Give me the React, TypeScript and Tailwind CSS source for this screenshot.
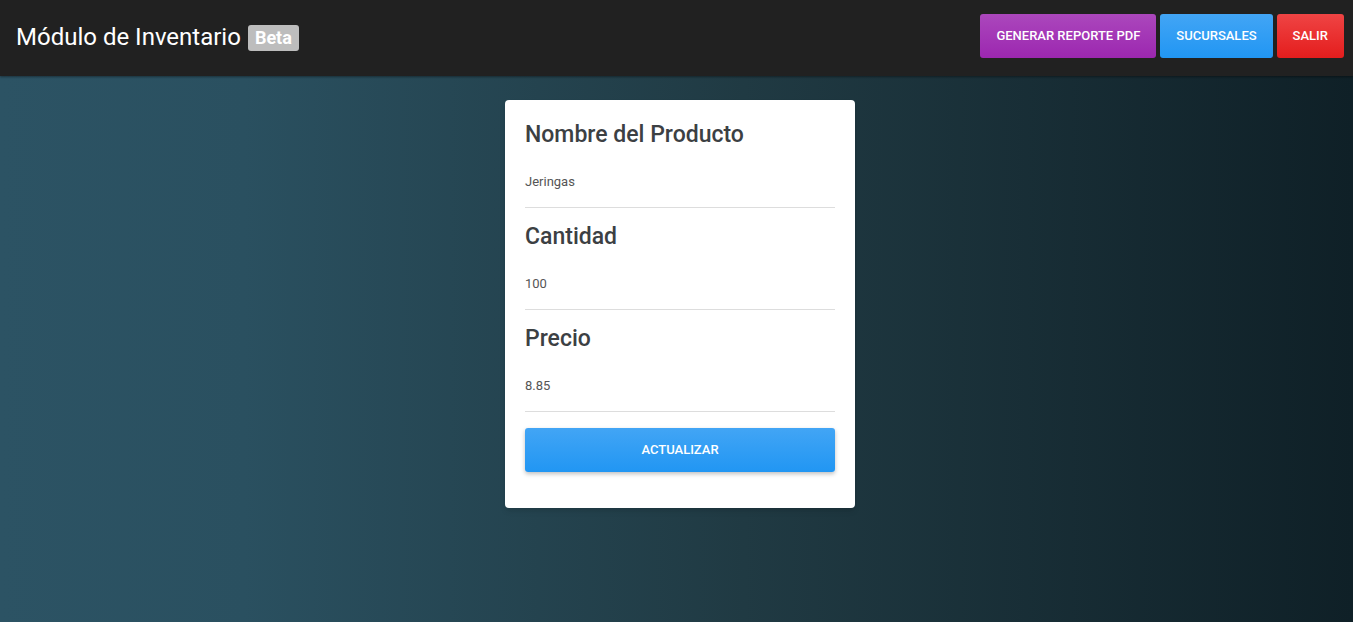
const App = () => {
  const fields = [
    { label: "Nombre del Producto", value: "Jeringas" },
    { label: "Cantidad", value: "100" },
    { label: "Precio", value: "8.85" },
  ];
  return (
    <div
      className="min-h-[622px] w-full bg-[linear-gradient(to_right,#2c5364_0%,#2a5060_18%,#203a43_55%,#0f2027_100%)]"
      style={{ fontFamily: "Roboto, 'Liberation Sans', sans-serif" }}
    >
      <div className="h-[76px] bg-[#212121] flex items-center justify-between pl-4 pr-[9px] shadow-[0_1px_2px_rgba(0,0,0,0.4)]">
        <div className="flex items-center gap-[7px] pb-[2px]">
          <div className="text-[24px] text-white leading-none">Módulo de Inventario</div>
          <span className="bg-[#bdbdbd] text-white font-bold text-[18px] leading-[26px] px-[7px] rounded-[3px] mt-[2px]">
            Beta
          </span>
        </div>
        <div className="flex gap-1 mb-[4px]">
          <button className="h-[44px] px-4 rounded-[3px] text-white text-[13px] font-medium uppercase bg-[linear-gradient(to_bottom,#ab47bc,#9c27b0)]">
            Generar reporte PDF
          </button>
          <button className="h-[44px] px-4 rounded-[3px] text-white text-[13px] font-medium uppercase bg-[linear-gradient(to_bottom,#42a5f5,#2196f3)]">
            Sucursales
          </button>
          <button className="h-[44px] px-4 rounded-[3px] text-white text-[13px] font-medium uppercase bg-[linear-gradient(to_bottom,#ef4444,#e41d1d)]">
            Salir
          </button>
        </div>
      </div>

      <div className="flex justify-center pt-6 pl-[7px]">
        <div className="w-[350px] bg-white rounded-[4px] px-5 pt-[22px] pb-[36px] shadow-md">
          {fields.map((f, i) => (
            <div key={i} className={i > 0 ? "mt-4" : ""}>
              <div className="text-[23px] leading-[26px] font-medium text-[#3c4043]">{f.label}</div>
              <div className="mt-[24px] text-[13px] leading-[20px] text-[#555] pb-[15px] border-b border-[#ddd]">
                {f.value}
              </div>
            </div>
          ))}
          <button className="mt-4 w-full h-[44px] rounded-[3px] text-white text-[13px] font-medium uppercase bg-[linear-gradient(to_bottom,#42a5f5,#2196f3)] shadow-[0_2px_4px_rgba(0,0,0,0.25)]">
            Actualizar
          </button>
        </div>
      </div>
    </div>
  );
};

export default App;
